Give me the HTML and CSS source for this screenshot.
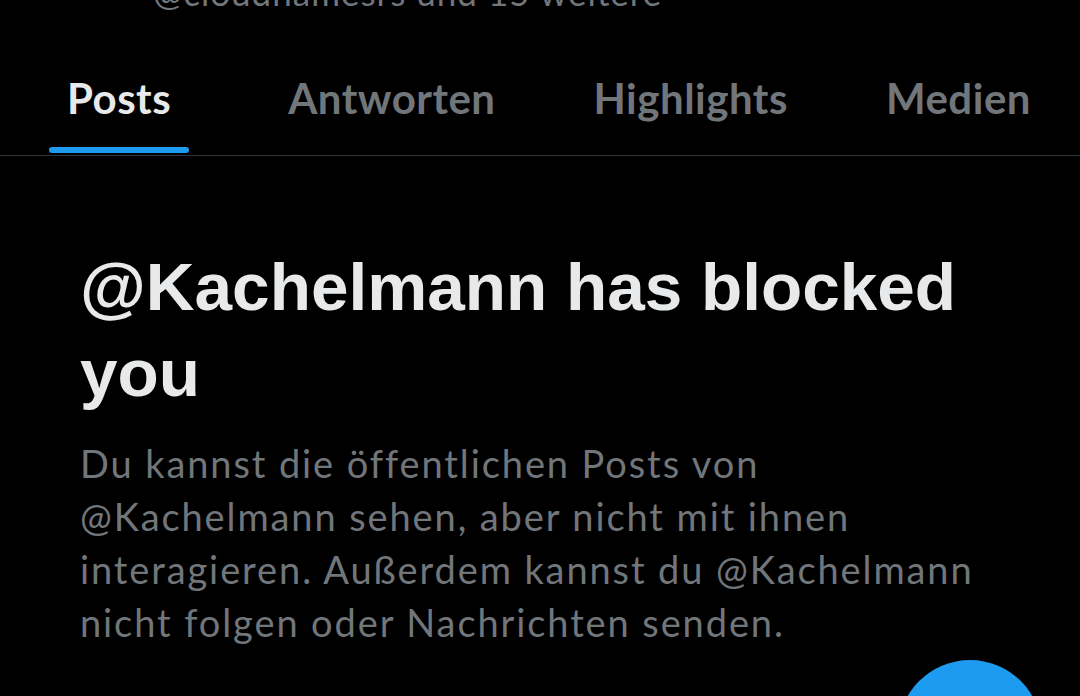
FILE: index.html
```html
<!DOCTYPE html>
<html lang="de">
<head>
  <meta charset="UTF-8">
  <meta name="viewport" content="width=device-width, initial-scale=1.0">
  <title>Kachelmann</title>
  <link rel="stylesheet" href="styles.css">
</head>
<body>
  <div class="followed-by">@cloudnamesrs und 15 weitere</div>

  <nav class="tabs">
    <div class="tab active">
      <span class="tab-label">Posts</span>
      <span class="tab-bar"></span>
    </div>
    <div class="tab">
      <span class="tab-label">Antworten</span>
      <span class="tab-bar"></span>
    </div>
    <div class="tab">
      <span class="tab-label">Highlights</span>
      <span class="tab-bar"></span>
    </div>
    <div class="tab">
      <span class="tab-label">Medien</span>
      <span class="tab-bar"></span>
    </div>
  </nav>

  <section class="blocked">
    <h1>@Kachelmann has blocked you</h1>
    <p>Du kannst die öffentlichen Posts von @Kachelmann sehen, aber nicht mit ihnen interagieren. Außerdem kannst du @Kachelmann nicht folgen oder Nachrichten senden.</p>
  </section>

  <div class="fab"></div>
</body>
</html>
```

FILE: styles.css
```css
* {
  box-sizing: border-box;
  margin: 0;
  padding: 0;
}

html, body {
  background: #000;
  height: 100%;
  overflow: hidden;
}

body {
  font-family: 'Lato', sans-serif;
  color: #e7e9ea;
}

.followed-by {
  height: 36px;
  margin-top: -26px;
  padding-left: 153px;
  font-size: 35px;
  letter-spacing: 1px;
  line-height: 36px;
  color: #71767b;
  white-space: nowrap;
}

.tabs {
  display: flex;
  align-items: flex-end;
  gap: 62px;
  height: 146px;
  padding-left: 49px;
  border-bottom: 1px solid #2f3336;
}

.tab {
  display: flex;
  flex-direction: column;
  align-items: stretch;
  padding: 0 18px;
}

.tab:first-child {
  margin-right: 19px;
}

.tab-label {
  font-size: 42px;
  font-weight: 700;
  letter-spacing: 0.5px;
  line-height: 50px;
  color: #71767b;
  margin-bottom: 24px;
  white-space: nowrap;
}

.tab-bar {
  height: 6px;
  margin: 0 -18px 2px;
  border-radius: 3px;
  background: transparent;
}

.tab.active .tab-label {
  color: #e7e9ea;
}

.tab.active .tab-bar {
  background: #1d9bf0;
}

.blocked {
  padding: 88px 80px 0;
}

.blocked h1 {
  font-family: 'Liberation Sans', Arial, sans-serif;
  font-size: 67.5px;
  font-weight: 700;
  line-height: 86px;
  color: #e7e9ea;
}

.blocked p {
  margin-top: 21px;
  font-size: 38px;
  letter-spacing: 1.9px;
  line-height: 53px;
  color: #71767b;
}

.fab {
  position: fixed;
  left: 898px;
  top: 660px;
  width: 144px;
  height: 144px;
  border-radius: 50%;
  background: #1d9bf0;
}
```
